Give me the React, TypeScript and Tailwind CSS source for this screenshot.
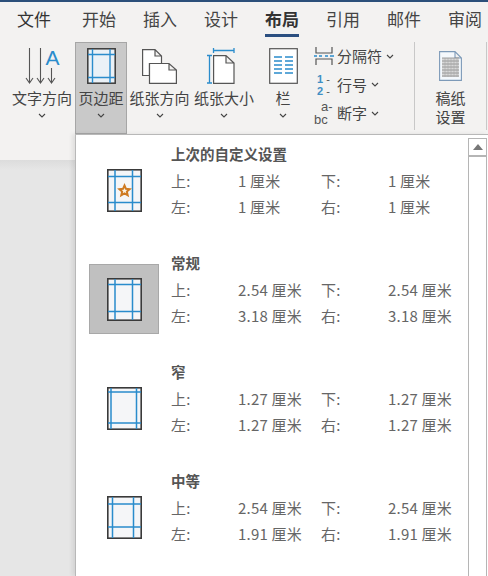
import React from "react";

const FONT = "font-['Noto_Sans_CJK_SC',sans-serif]";

function Chevron({ className = "" }: { className?: string }) {
  return (
    <svg width="8" height="5" viewBox="0 0 8 5" className={className}>
      <path d="M1 1l3 3 3-3" fill="none" stroke="#444" strokeWidth="1.1" />
    </svg>
  );
}

const BLUE = "#2a8ccc";
const DARK = "#3a3a3a";

function MarginIcon({ t, b, l, r, star }: { t: number; b: number; l: number; r: number; star?: boolean }) {
  return (
    <svg width="35" height="43" viewBox="0 0 35 43">
      <rect x="0.8" y="0.8" width="33.4" height="41.4" fill="#f5f6f8" stroke={DARK} strokeWidth="1.6" />
      <path d={`M${l} 1V42M${r} 1V42`} stroke={BLUE} strokeWidth="1.5" />
      <path d={`M1 ${t}H34M1 ${b}H34`} stroke={BLUE} strokeWidth="1.5" />
      {star && (
        <path
          d="M17.5 16.5l1.5 3.3 3.6.4-2.7 2.4.8 3.6-3.2-1.9-3.2 1.9.8-3.6-2.7-2.4 3.6-.4z"
          fill="#fbf3e4"
          stroke="#cf7b22"
          strokeWidth="2"
        />
      )}
    </svg>
  );
}

function RibbonMarginIcon() {
  return (
    <svg width="29" height="36" viewBox="0 0 29 36">
      <rect x="0.8" y="0.8" width="27.4" height="34.4" fill="#eaf1f7" stroke={DARK} strokeWidth="1.5" />
      <path d="M5.5 1V35M23 1V35M1 6.5H28M1 29.5H28" stroke={BLUE} strokeWidth="1.4" />
    </svg>
  );
}

function TextDirIcon() {
  return (
    <svg width="35" height="36" viewBox="0 0 35 36" className="overflow-visible">
      <path d="M4.5 0V35M1 30l3.5 5 3.5-5M15.5 0V35M12 30l3.5 5 3.5-5M26.5 20V35M23 30l3.5 5 3.5-5" fill="none" stroke="#555" strokeWidth="1.1" />
      <text x="20.5" y="17" fontSize="21" fill={BLUE} fontFamily="Liberation Sans">A</text>
    </svg>
  );
}

function OrientationIcon() {
  return (
    <svg width="35" height="35" viewBox="0 0 35 35">
      <path d="M0.6 0.6H13L19.5 7V14.5H7.5V26.5H0.6Z M13 0.6V7H19.5" fill="#fff" stroke="#555" strokeWidth="1.2" />
      <path d="M7.5 14.5H27L34.4 21V34.4H7.5Z M27 14.5V21H34.4" fill="#fff" stroke="#555" strokeWidth="1.2" />
    </svg>
  );
}

function SizeIcon() {
  return (
    <svg width="34" height="36" viewBox="0 0 34 36">
      <path d="M6.5 0V5M27 0V5M6.5 2.5H27" fill="none" stroke={BLUE} strokeWidth="1.3" />
      <path d="M0 7.5H5M0 35H5M2.5 7.5V35" fill="none" stroke={BLUE} strokeWidth="1.3" />
      <path d="M6.6 7.6H19L27 15V35.4H6.6Z M19 7.6V15H27" fill="#fff" stroke="#555" strokeWidth="1.2" />
    </svg>
  );
}

function ColumnsIcon() {
  return (
    <svg width="29" height="36" viewBox="0 0 29 36">
      <rect x="0.7" y="0.7" width="27.6" height="34.6" fill="#fff" stroke="#555" strokeWidth="1.2" />
      <path d="M5 9H13M16 9H24M5 13H13M16 13H24M5 17H13M16 17H24M5 21H13M16 21H24M5 25H13M16 25H24" stroke={BLUE} strokeWidth="1.3" />
    </svg>
  );
}

function BreakIcon() {
  return (
    <svg width="20" height="19" viewBox="0 0 20 19">
      <path d="M2 0V6H18V0M2 18V12H18V18" fill="none" stroke="#555" strokeWidth="1.2" />
      <path d="M0 9H3M5 9H8M11 9H14M16 9H20" stroke={BLUE} strokeWidth="1.3" />
    </svg>
  );
}

function GridPaperIcon() {
  const rows = [7, 10, 13, 16, 19, 22, 25];
  return (
    <svg width="23" height="30" viewBox="0 0 23 30">
      <path d="M0.6 0.6H16L22.4 7V29.4H0.6Z M16 0.6V7H22.4" fill="#f4f8fc" stroke="#7d9ab8" strokeWidth="1.1" />
      <rect x="3" y="7" width="17" height="19" fill="#d8d8d8" />
      {rows.map((r) => (
        <path key={r} d={`M3 ${r}H20`} stroke="#888" strokeWidth="0.8" />
      ))}
      <path d="M6 7V26M9 7V26M12 7V26M15 7V26M18 7V26" stroke="#aaa" strokeWidth="0.6" />
    </svg>
  );
}

function RibbonButton({ w, label, icon, active }: { w: string; label: React.ReactNode; icon: React.ReactNode; active?: boolean }) {
  return (
    <div className={`${w} shrink-0 h-[92px] flex flex-col items-center ${active ? "bg-[#c9c9c9] border border-[#a6a6a6]" : ""}`}>
      <div className={`${active ? "h-[41px]" : "h-[42px]"} flex items-end justify-center`}>{icon}</div>
      <div className="mt-[4px] text-[15px] leading-[20px] text-[#444] whitespace-nowrap">{label}</div>
      <Chevron className="mt-[5px]" />
    </div>
  );
}

function SmallItem({ icon, label }: { icon: React.ReactNode; label: string }) {
  return (
    <div className="flex items-center h-[28.5px]">
      <div className="w-[23px] flex justify-start">{icon}</div>
      <span className="text-[15px] leading-[20px] text-[#444]">{label}</span>
      <Chevron className="ml-[4px]" />
    </div>
  );
}

function Row({ a, av, b, bv }: { a: string; av: string; b: string; bv: string }) {
  return (
    <div className="flex h-[26px] items-center text-[15px] text-[#666] whitespace-nowrap tracking-[0.2px]">
      <span className="w-[67px]">{a}</span>
      <span className="w-[83px]">{av}</span>
      <span className="w-[67px]">{b}</span>
      <span>{bv}</span>
    </div>
  );
}

function Preset({
  title, top, bottom, left, right, icon, active,
}: {
  title: string; top: string; bottom: string; left: string; right: string; icon: React.ReactNode; active?: boolean;
}) {
  return (
    <div className="flex h-[109px]">
      <div className="w-[95px] pl-[13px] pt-[15px]">
        <div className={`w-[70px] h-[70px] flex items-center justify-center ${active ? "bg-[#c0c0c0] border border-[#a8a8a8]" : ""}`}>
          {icon}
        </div>
      </div>
      <div>
        <div className="h-[28px] flex items-center text-[14.5px] font-bold text-[#555] whitespace-nowrap">{title}</div>
        <Row a="上:" av={top} b="下:" bv={bottom} />
        <Row a="左:" av={left} b="右:" bv={right} />
      </div>
    </div>
  );
}

const tabs = ["开始", "插入", "设计", "布局", "引用", "邮件", "审阅"];

export default function App() {
  return (
    <div className={`w-[488px] h-[576px] overflow-hidden bg-[#e6e6e6] flex flex-col ${FONT}`}>
      <div className="h-[2px] bg-[#2b4f7a] shrink-0" />
      <div className="h-[132px] bg-[#f3f2f1] shrink-0">
        <div className="flex h-[38px] pl-[17px]">
          <div className="w-[65px] shrink-0 pt-[4px] text-[17px] leading-[26px] text-[#333]">文件</div>
          {tabs.map((t) => (
            <div key={t} className="w-[61px] shrink-0 pt-[4px] text-[17px] leading-[26px] text-[#444]">
              <div className={`w-[34px] h-[31px] whitespace-nowrap ${t === "布局" ? "font-bold border-b-[3px] border-[#2b4f80] text-[#333]" : ""}`}>{t}</div>
            </div>
          ))}
        </div>
        <div className="flex h-[92px] mt-[2px]">
          <RibbonButton w="w-[75px] pl-[9px]" label="文字方向" icon={<TextDirIcon />} />
          <RibbonButton w="w-[52px]" active label="页边距" icon={<RibbonMarginIcon />} />
          <RibbonButton w="w-[65px]" label="纸张方向" icon={<OrientationIcon />} />
          <RibbonButton w="w-[64px]" label="纸张大小" icon={<SizeIcon />} />
          <RibbonButton w="w-[54px]" label="栏" icon={<ColumnsIcon />} />
          <div className="w-[104px] shrink-0 pl-[4px]">
            <SmallItem icon={<BreakIcon />} label="分隔符" />
            <SmallItem
              icon={
                <span className="flex flex-col items-start pl-[3px] text-[11px] leading-[12px] font-bold text-[#3f8fc4] font-['Liberation_Sans',sans-serif]">
                  <span>1 <span className="font-normal text-[#555]">-</span></span>
                  <span>2 <span className="font-normal text-[#555]">-</span></span>
                </span>
              }
              label="行号"
            />
            <SmallItem
              icon={
                <span className="flex flex-col items-start text-[#555] text-[13px] leading-[13px] font-['Liberation_Sans',sans-serif]">
                  <span className="pl-[7px]">a-</span>
                  <span>bc</span>
                </span>
              }
              label="断字"
            />
          </div>
          <div className="w-px h-[88px] shrink-0 bg-[#c8c8c8]" />
          <div className="w-[71px] shrink-0 flex flex-col items-center">
            <div className="h-[39px] flex items-end justify-center"><GridPaperIcon /></div>
            <div className="mt-[7px] text-[15px] leading-[19px] text-[#444] text-center">稿纸<br />设置</div>
          </div>
          <div className="w-px h-[88px] shrink-0 bg-[#c8c8c8]" />
        </div>
      </div>
      <div className="flex flex-1 min-h-0">
        <div className="w-[75px] shrink-0">
          <div className="h-[26px] bg-[#f3f2f1]" />
          <div className="h-[10px] bg-linear-to-b from-[#dcdcdc] to-[#e6e6e6]" />
        </div>
        <div className="flex-1 bg-white border-l border-t border-[#b8b8b8] flex shadow-[-3px_0_4px_rgba(0,0,0,0.08)]">
          <div className="flex-1 pt-[5px]">
            <Preset title="上次的自定义设置" top="1 厘米" bottom="1 厘米" left="1 厘米" right="1 厘米" icon={<MarginIcon t={7.5} b={33.5} l={8} r={25.5} star />} />
            <Preset active title="常规" top="2.54 厘米" bottom="2.54 厘米" left="3.18 厘米" right="3.18 厘米" icon={<MarginIcon t={6.5} b={33.5} l={8} r={25.5} />} />
            <Preset title="窄" top="1.27 厘米" bottom="1.27 厘米" left="1.27 厘米" right="1.27 厘米" icon={<MarginIcon t={5} b={36} l={4} r={29.5} />} />
            <Preset title="中等" top="2.54 厘米" bottom="2.54 厘米" left="1.91 厘米" right="1.91 厘米" icon={<MarginIcon t={8} b={31} l={5.5} r={26.5} />} />
          </div>
          <div className="w-[19px] mr-[1px] mt-[3px] border-l border-r border-[#b5b5b5] flex flex-col">
            <div className="h-[19px] border-t border-b-2 border-[#b5b5b5] flex items-center justify-center bg-white">
              <svg width="10" height="6" viewBox="0 0 10 6"><path d="M5 0l5 6H0z" fill="#777" /></svg>
            </div>
          </div>
        </div>
      </div>
    </div>
  );
}
